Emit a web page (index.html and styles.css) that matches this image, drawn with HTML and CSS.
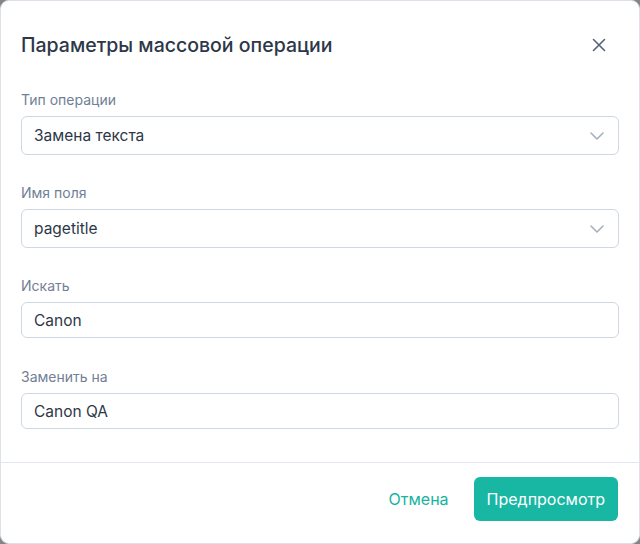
FILE: index.html
```html
<!DOCTYPE html>
<html lang="ru">

<head>
    <meta charset="UTF-8">
    <meta name="viewport" content="width=device-width, initial-scale=1.0">
    <title>Параметры массовой операции</title>
    <link rel="stylesheet" href="styles.css">
</head>

<body>
    <div class="modal">
        <div class="modal-header">
            <h2>Параметры массовой операции</h2>
            <button class="close-btn" aria-label="Закрыть">
                <svg width="14" height="14" viewBox="0 0 14 14">
                    <path d="M1.5 1.5 L12.5 12.5 M12.5 1.5 L1.5 12.5" stroke="#556275" stroke-width="1.6" stroke-linecap="round" fill="none" />
                </svg>
            </button>
        </div>

        <div class="modal-body">
            <div class="field">
                <label>Тип операции</label>
                <div class="select">
                    <span>Замена текста</span>
                    <svg width="14" height="8" viewBox="0 0 14 8">
                        <path d="M1 1 L7 7 L13 1" stroke="#a3adbd" stroke-width="1.5" fill="none" stroke-linecap="round" stroke-linejoin="round" />
                    </svg>
                </div>
            </div>

            <div class="field">
                <label>Имя поля</label>
                <div class="select">
                    <span>pagetitle</span>
                    <svg width="14" height="8" viewBox="0 0 14 8">
                        <path d="M1 1 L7 7 L13 1" stroke="#a3adbd" stroke-width="1.5" fill="none" stroke-linecap="round" stroke-linejoin="round" />
                    </svg>
                </div>
            </div>

            <div class="field">
                <label>Искать</label>
                <input class="input" type="text" value="Canon">
            </div>

            <div class="field field-last">
                <label>Заменить на</label>
                <input class="input" type="text" value="Canon QA">
            </div>
        </div>

        <div class="modal-footer">
            <button class="btn btn-ghost">Отмена</button>
            <button class="btn btn-primary">Предпросмотр</button>
        </div>
    </div>
</body>

</html>
```

FILE: styles.css
```css
* {
    margin: 0;
    padding: 0;
    box-sizing: border-box;
}

body {
    width: 640px;
    height: 544px;
    background-color: #858585;
    font-family: Inter, "Noto Sans", sans-serif;
    color: #2d3748;
}

.modal {
    height: 544px;
    display: flex;
    flex-direction: column;
    background-color: #fff;
    border: 1px solid #dbe2ea;
    border-radius: 9px;
}

.modal-header {
    display: flex;
    align-items: center;
    justify-content: space-between;
    padding: 30px 26px 0 20px;
}

.modal-header h2 {
    font-size: 19.5px;
    line-height: 28px;
    font-weight: 500;
    color: #2d3748;
}

.close-btn {
    width: 28px;
    height: 28px;
    display: flex;
    align-items: center;
    justify-content: center;
    background: none;
    border: none;
    cursor: pointer;
}

.modal-body {
    padding: 31px 20px 33px 20px;
    display: flex;
    flex-direction: column;
    gap: 28px;
}

.field label {
    display: block;
    font-size: 14px;
    line-height: 20px;
    color: #718096;
    margin-bottom: 6px;
}

.field-last {
    margin-top: 1px;
}

.select {
    height: 39px;
    display: flex;
    align-items: center;
    justify-content: space-between;
    padding: 0 14px 0 12px;
    border: 1px solid #cfd7e2;
    border-radius: 6px;
    font-size: 15.5px;
    color: #2d3748;
}

.input {
    width: 100%;
    height: 36px;
    padding: 0 12px;
    border: 1px solid #cfd7e2;
    border-radius: 6px;
    font-family: inherit;
    font-size: 15.5px;
    color: #2d3748;
    outline: none;
}

.modal-footer {
    margin-top: auto;
    border-top: 1px solid #e2e8f0;
    display: flex;
    justify-content: flex-end;
    align-items: center;
    padding: 14px 21px 22px 20px;
}

.btn {
    height: 44px;
    padding: 0 14px;
    font-family: inherit;
    font-size: 16px;
    font-weight: 400;
    border: none;
    border-radius: 6px;
    cursor: pointer;
}

.btn-ghost {
    background: none;
    color: #17b3a0;
    margin-right: 11px;
}

.btn-primary {
    padding: 0 13px;
    background-color: #17b7a3;
    color: #fff;
}

.btn-primary:hover {
    background-color: #119e8c;
}
```
